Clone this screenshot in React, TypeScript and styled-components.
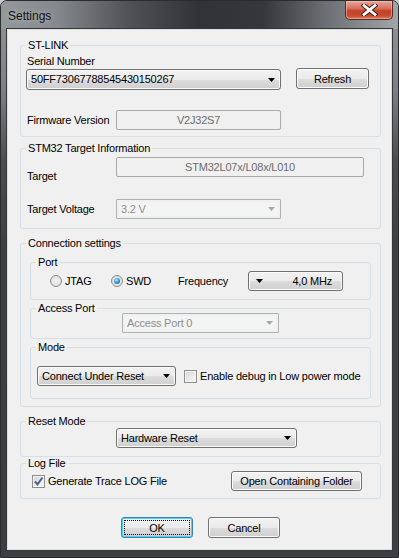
import styled, { createGlobalStyle } from 'styled-components';

const GlobalStyle = createGlobalStyle`
  html, body {
    margin: 0;
    padding: 0;
    background: #c9cbce;
  }
  body {
    font-family: 'Liberation Sans', Arial, sans-serif;
    font-size: 11px;
    color: #000;
  }
`;

const Arrow = ({ color = '#000' }: { color?: string }) => (
  <svg width='7' height='4' viewBox='0 0 7 4'>
    <path d='M0 0h7L3.5 4z' fill={color} />
  </svg>
);

const Check = () => (
  <svg width='11' height='11' viewBox='0 0 11 11'>
    <path d='M2 5.5l2.5 2.8L9.5 1.5' fill='none' stroke='#4a5f97' strokeWidth='2' />
  </svg>
);

const CloseGlyph = () => (
  <svg width='17' height='12' viewBox='0 0 17 12'>
    <path d='M3 1.5l11 9M14 1.5l-11 9' stroke='#3a1a14' strokeWidth='4.6' strokeLinecap='square' />
    <path d='M3 1.5l11 9M14 1.5l-11 9' stroke='#fff' strokeWidth='2.8' strokeLinecap='square' />
  </svg>
);

const App = () => {
  return (
    <>
      <GlobalStyle />
      <Window>
        <TitleBar>
          <Title>Settings</Title>
          <CloseButton>
            <CloseGlyph />
          </CloseButton>
        </TitleBar>

        <Client>
          <Group $h={98}>
            <Legend>ST-LINK</Legend>
            <Row $mt={3} $pl={6} $h={13}>
              <Text>Serial Number</Text>
            </Row>
            <Row $pl={5} $h={22} $align='flex-start'>
              <Combo $w={255} $mt={1}>
                <Text>50FF73067788545430150267</Text>
                <Arrow />
              </Combo>
              <Button $w={73} $ml={15}>
                Refresh
              </Button>
            </Row>
            <Row $mt={20} $pl={6} $h={20}>
              <FieldLabel $w={89}>Firmware Version</FieldLabel>
              <ReadOnly $w={165}>V2J32S7</ReadOnly>
            </Row>
          </Group>

          <Group $h={87} $mt={5}>
            <Legend>STM32 Target Information</Legend>
            <Row $mt={2} $pl={6} $align='flex-start'>
              <FieldLabel $w={89} $pt={13}>
                Target
              </FieldLabel>
              <ReadOnly $w={248}>STM32L07x/L08x/L010</ReadOnly>
            </Row>
            <Row $mt={16} $pl={6} $h={20}>
              <FieldLabel $w={89}>Target Voltage</FieldLabel>
              <Combo $w={165} $h={20} $disabled>
                <Text>3.2 V</Text>
                <Arrow color='#a8a8a8' />
              </Combo>
            </Row>
          </Group>

          <Group $h={170} $mt={8}>
            <Legend>Connection settings</Legend>
            <SubGroup $h={44} $mt={6}>
              <Legend>Port</Legend>
              <Row $mt={2} $pl={19} $h={20}>
                <RadioItem $w={61}>
                  <Radio />
                  <Text>JTAG</Text>
                </RadioItem>
                <RadioItem $w={67}>
                  <Radio $checked />
                  <Text>SWD</Text>
                </RadioItem>
                <FieldLabel $w={70}>Frequency</FieldLabel>
                <FreqButton>
                  <Arrow />
                  <Text>4,0 MHz</Text>
                </FreqButton>
              </Row>
            </SubGroup>
            <SubGroup $h={37} $mt={2}>
              <Legend>Access Port</Legend>
              <Row $mt={-2} $pl={91} $h={20}>
                <Combo $w={157} $h={20} $disabled>
                  <Text>Access Port 0</Text>
                  <Arrow color='#a8a8a8' />
                </Combo>
              </Row>
            </SubGroup>
            <SubGroup $h={58} $mt={2}>
              <Legend>Mode</Legend>
              <Row $mt={12} $pl={6} $h={20}>
                <Combo $w={139} $h={20}>
                  <Text>Connect Under Reset</Text>
                  <Arrow />
                </Combo>
                <CheckBox $ml={8} />
                <Text $ml={3}>Enable debug in Low power mode</Text>
              </Row>
            </SubGroup>
          </Group>

          <Group $h={42} $mt={8}>
            <Legend>Reset Mode</Legend>
            <Row $pl={95} $h={20}>
              <Combo $w={181} $h={20}>
                <Text>Hardware Reset</Text>
                <Arrow />
              </Combo>
            </Row>
          </Group>

          <Group $h={42} $mt={0}>
            <Legend>Log File</Legend>
            <Row $mt={1} $pl={11} $h={20}>
              <CheckBox>
                <Check />
              </CheckBox>
              <Text $ml={3}>Generate Trace LOG File</Text>
              <Button $w={131} $ml='auto' $mr={18} $h={20}>
                Open Containing Folder
              </Button>
            </Row>
          </Group>

          <DialogButtons>
            <Button $w={72} $focused>
              OK
            </Button>
            <Button $w={72}>Cancel</Button>
          </DialogButtons>
        </Client>
      </Window>
    </>
  );
};

export default App;

const Window = styled.div`
  width: 399px;
  height: 558px;
  box-sizing: border-box;
  padding: 0 6px 7px;
  border: 1px solid #2a2c2f;
  border-radius: 7px 7px 0 0;
  display: flex;
  flex-direction: column;
  background: linear-gradient(
    180deg,
    #939699 0px,
    #7c7f83 90px,
    #4a4c50 160px,
    #3e4044 240px,
    #3c3e42 100%
  );
`;

const TitleBar = styled.div`
  height: 28px;
  margin: 0 -6px;
  padding: 0 5px 0 7px;
  display: flex;
  justify-content: space-between;
  align-items: flex-start;
  border-radius: 6px 6px 0 0;
  background: linear-gradient(
    90deg,
    #95989b 0%,
    #85888c 14%,
    #505256 32%,
    #303235 50%,
    #35373a 66%,
    #6c6f73 82%,
    #a2a5a8 100%
  );
`;

const Title = styled.div`
  margin-top: 7px;
  font-size: 12px;
  line-height: 16px;
  color: #111;
  text-shadow: 0 0 6px rgba(255, 255, 255, 0.55);
`;

const CloseButton = styled.div`
  width: 48px;
  height: 19px;
  box-sizing: border-box;
  border: 1px solid #5a2a22;
  border-top: none;
  border-radius: 0 0 5px 5px;
  display: flex;
  align-items: center;
  justify-content: center;
  background: linear-gradient(
    180deg,
    #e9a597 0%,
    #d8735f 40%,
    #c2412a 55%,
    #c64c30 80%,
    #d9775a 100%
  );
  box-shadow: inset 0 0 0 1px rgba(255, 220, 210, 0.45);
`;

const Client = styled.div`
  flex: 1;
  box-sizing: border-box;
  padding: 9px 10px 0 12px;
  background: #f0f0f0;
  border: 1px solid #dcdee0;
  box-shadow: 0 0 0 1px #35373a;
  display: flex;
  flex-direction: column;
`;

const Group = styled.fieldset<{ $h: number; $mt?: number }>`
  margin: ${({ $mt }) => $mt ?? 0}px 0 0;
  padding: 0;
  min-inline-size: 0;
  height: ${({ $h }) => $h}px;
  box-sizing: border-box;
  border: 1px solid #d5dfe5;
  border-radius: 3px;
  flex-shrink: 0;
`;

const SubGroup = styled(Group)`
  margin-left: 9px;
  margin-right: 9px;
`;

const Legend = styled.legend`
  margin-left: 5px;
  padding: 0 2px;
  font-size: 11px;
  line-height: 13px;
  letter-spacing: -0.2px;
`;

const Row = styled.div<{ $mt?: number; $pl?: number; $h?: number; $align?: string }>`
  display: flex;
  align-items: ${({ $align }) => $align ?? 'center'};
  margin-top: ${({ $mt }) => $mt ?? 0}px;
  padding-left: ${({ $pl }) => $pl ?? 0}px;
  height: ${({ $h }) => ($h ? `${$h}px` : 'auto')};
`;

const Text = styled.span<{ $ml?: number }>`
  margin-left: ${({ $ml }) => $ml ?? 0}px;
  line-height: 13px;
  letter-spacing: -0.2px;
  white-space: nowrap;
`;

const FieldLabel = styled(Text)<{ $w: number; $pt?: number }>`
  width: ${({ $w }) => $w}px;
  padding-top: ${({ $pt }) => $pt ?? 0}px;
  flex-shrink: 0;
`;

const Combo = styled.div<{ $w: number; $h?: number; $mt?: number; $disabled?: boolean }>`
  width: ${({ $w }) => $w}px;
  height: ${({ $h }) => $h ?? 21}px;
  margin-top: ${({ $mt }) => $mt ?? 0}px;
  box-sizing: border-box;
  padding: 0 5px 0 4px;
  display: flex;
  align-items: center;
  justify-content: space-between;
  flex-shrink: 0;
  border: 1px solid ${({ $disabled }) => ($disabled ? '#adb2b5' : '#707070')};
  border-radius: ${({ $disabled }) => ($disabled ? '1px' : '3px')};
  color: ${({ $disabled }) => ($disabled ? '#8d8d8d' : '#000')};
  background: ${({ $disabled }) =>
    $disabled
      ? '#f4f4f4'
      : 'linear-gradient(180deg, #f2f2f2 0%, #ebebeb 50%, #dddddd 51%, #cfcfcf 100%)'};
  box-shadow: ${({ $disabled }) => ($disabled ? 'inset 0 0 0 2px #f0f0f0' : 'inset 0 0 0 1px #fcfcfc')};
`;

const Button = styled.button<{
  $w: number;
  $h?: number;
  $ml?: number | 'auto';
  $mr?: number;
  $focused?: boolean;
}>`
  width: ${({ $w }) => $w}px;
  height: ${({ $h }) => $h ?? 21}px;
  margin: 0 ${({ $mr }) => $mr ?? 0}px 0 ${({ $ml }) => ($ml === 'auto' ? 'auto' : `${$ml ?? 0}px`)};
  padding: 0;
  flex-shrink: 0;
  box-sizing: border-box;
  font-family: 'Liberation Sans', Arial, sans-serif;
  font-size: 11px;
  letter-spacing: -0.2px;
  color: #000;
  border: 1px solid ${({ $focused }) => ($focused ? '#3c7fb1' : '#707070')};
  border-radius: 3px;
  background: linear-gradient(180deg, #f2f2f2 0%, #ebebeb 50%, #dddddd 51%, #cfcfcf 100%);
  box-shadow: inset 0 0 0 1px ${({ $focused }) => ($focused ? '#48d4fa' : '#fcfcfc')};
  outline: ${({ $focused }) => ($focused ? '1px dotted #000' : 'none')};
  outline-offset: -4px;
`;

const ReadOnly = styled.div<{ $w: number }>`
  width: ${({ $w }) => $w}px;
  height: 20px;
  box-sizing: border-box;
  flex-shrink: 0;
  border: 1px solid #a7a9ac;
  border-radius: 2px;
  background: #f0f0f0;
  color: #6d6d6d;
  display: flex;
  align-items: center;
  justify-content: center;
  letter-spacing: -0.2px;
`;

const RadioItem = styled.div<{ $w: number }>`
  width: ${({ $w }) => $w}px;
  display: flex;
  align-items: center;
  gap: 3px;
  flex-shrink: 0;
`;

const Radio = styled.span<{ $checked?: boolean }>`
  width: 12px;
  height: 12px;
  box-sizing: border-box;
  border-radius: 50%;
  border: 1px solid #8e8f8f;
  background: radial-gradient(circle at 50% 50%, #f6f6f6 0%, #e4e4e4 55%, #cfcfcf 100%);
  display: flex;
  align-items: center;
  justify-content: center;

  &::after {
    content: '';
    display: ${({ $checked }) => ($checked ? 'block' : 'none')};
    width: 6px;
    height: 6px;
    border-radius: 50%;
    background: radial-gradient(circle at 40% 35%, #b6ecff 0%, #2a8ad4 55%, #12508a 100%);
  }
`;

const FreqButton = styled.div`
  width: 95px;
  height: 20px;
  box-sizing: border-box;
  padding: 0 10px 0 7px;
  display: flex;
  align-items: center;
  justify-content: space-between;
  border: 1px solid #707070;
  border-radius: 3px;
  background: linear-gradient(180deg, #f2f2f2 0%, #ebebeb 50%, #dddddd 51%, #cfcfcf 100%);
  box-shadow: inset 0 0 0 1px #fcfcfc;
`;

const CheckBox = styled.span<{ $ml?: number }>`
  width: 13px;
  height: 13px;
  margin-left: ${({ $ml }) => $ml ?? 0}px;
  box-sizing: border-box;
  flex-shrink: 0;
  border: 1px solid #8e8f8f;
  background: linear-gradient(135deg, #d4d4d4 0%, #ececec 60%, #fafafa 100%);
  box-shadow: inset 0 0 0 1px #f4f4f4;
  display: flex;
  align-items: center;
  justify-content: center;
`;

const DialogButtons = styled.div`
  margin-top: 18px;
  display: flex;
  justify-content: center;
  gap: 15px;
`;
